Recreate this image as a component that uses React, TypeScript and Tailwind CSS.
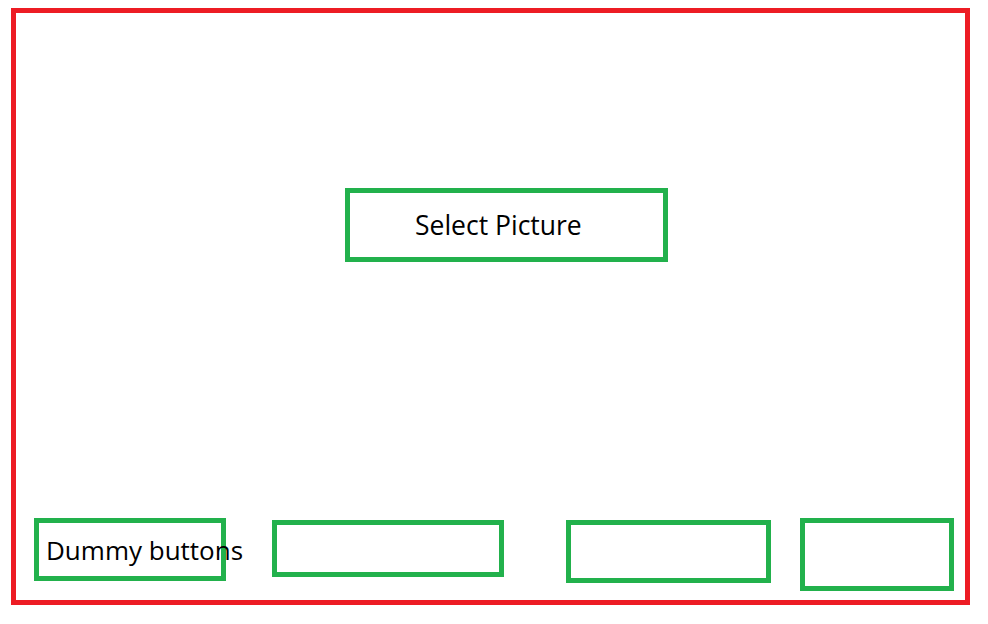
export default function App() {
  return (
    <div className="w-[988px] h-[624px] bg-white pl-[11px] pt-[8px]" style={{ fontFamily: '"Open Sans", "Noto Sans", sans-serif' }}>
      <div className="w-[959px] h-[597px] border-[5px] border-[#ed1c24] flex flex-col">
        <div className="ml-[329px] mt-[175px] w-[323px] h-[74px] border-[5px] border-[#22b14c] flex items-center pl-[65px] text-[26.5px] text-black leading-none">
          Select Picture
        </div>
        <div className="mt-[256px] flex items-start">
          <div className="ml-[18px] w-[192px] h-[63px] border-[5px] border-[#22b14c] flex items-center pl-[7px] text-[26px] text-black leading-none whitespace-nowrap overflow-visible">
            Dummy buttons
          </div>
          <div className="ml-[46px] mt-[2px] w-[232px] h-[57px] border-[5px] border-[#22b14c]" />
          <div className="ml-[62px] mt-[2px] w-[205px] h-[63px] border-[5px] border-[#22b14c]" />
          <div className="ml-[29px] w-[154px] h-[73px] border-[5px] border-[#22b14c]" />
        </div>
      </div>
    </div>
  );
}
